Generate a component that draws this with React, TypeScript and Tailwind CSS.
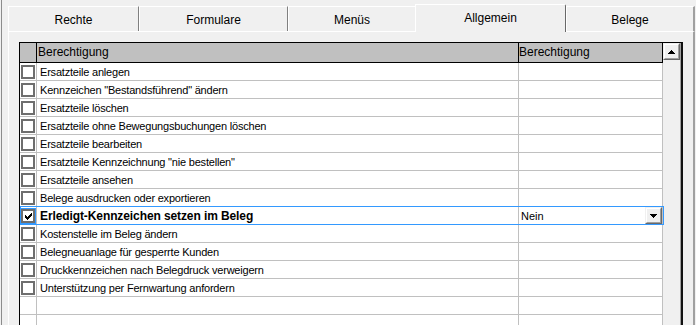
import React from "react";

const rows: { text: string; bold?: boolean; checked?: boolean; value?: string }[] = [
  { text: "Ersatzteile anlegen" },
  { text: 'Kennzeichen "Bestandsführend" ändern' },
  { text: "Ersatzteile löschen" },
  { text: "Ersatzteile ohne Bewegungsbuchungen löschen" },
  { text: "Ersatzteile bearbeiten" },
  { text: 'Ersatzteile Kennzeichnung "nie bestellen"' },
  { text: "Ersatzteile ansehen" },
  { text: "Belege ausdrucken oder exportieren" },
  { text: "Erledigt-Kennzeichen setzen im Beleg", bold: true, checked: true, value: "Nein" },
  { text: "Kostenstelle im Beleg ändern" },
  { text: "Belegneuanlage für gesperrte Kunden" },
  { text: "Druckkennzeichen nach Belegdruck verweigern" },
  { text: "Unterstützung per Fernwartung anfordern" },
  { text: "" },
  { text: "" },
  { text: "" },
];

function Check() {
  const cols = [
    [2, 4],
    [3, 5],
    [4, 6],
    [3, 5],
    [2, 4],
    [1, 3],
    [0, 2],
  ];
  return (
    <svg width="7" height="7" viewBox="0 0 7 7" shapeRendering="crispEdges">
      {cols.map(([a, b], i) => (
        <rect key={i} x={i} y={a} width="1" height={b - a + 1} fill="#000" />
      ))}
    </svg>
  );
}

function Tri({ up }: { up?: boolean }) {
  const ws = up ? [1, 3, 5, 7] : [7, 5, 3, 1];
  return (
    <svg width="7" height="4" viewBox="0 0 7 4" shapeRendering="crispEdges">
      {ws.map((w, i) => (
        <rect key={i} x={(7 - w) / 2} y={i} width={w} height="1" fill="#000" />
      ))}
    </svg>
  );
}

function Bevel({ children, className }: { children?: React.ReactNode; className: string }) {
  return (
    <div className={"border border-t-[#f0f0f0] border-l-[#f0f0f0] border-b-[#696969] border-r-[#696969] " + className}>
      <div className="w-full h-full border border-t-white border-l-white border-b-[#a0a0a0] border-r-[#a0a0a0] bg-[#f0f0f0] flex items-center justify-center">
        {children}
      </div>
    </div>
  );
}

function Tab({ label, w, selected, last }: { label: string; w: string; selected?: boolean; last?: boolean }) {
  if (selected) {
    return (
      <div
        className={
          "relative -mb-px h-[28px] shrink-0 bg-[#f0f0f0] border-t border-l border-white border-r border-r-[#696969] rounded-tr-[2px] pt-[6px] text-center text-[12px] leading-[14px] text-black " +
          w
        }
      >
        {label}
      </div>
    );
  }
  return (
    <div
      className={
        "h-[25px] shrink-0 border-t border-l border-white pt-[6px] text-center text-[12px] leading-[14px] text-black " +
        (last ? "border-r-2 border-r-[#a0a0a0] " : label === "Menüs" ? "" : "border-r border-r-[#808080] ") +
        w
      }
    >
      {label}
    </div>
  );
}

export default function App() {
  return (
    <div className="w-[696px] h-[325px] bg-[#f0f0f0] overflow-hidden flex font-['Liberation_Sans',Arial,sans-serif]">
      <div className="ml-px w-px bg-[#8c8c8c] shrink-0" />
      <div className="ml-[6px] w-[687px] shrink-0 flex flex-col">
        <div className="relative z-10 flex items-end h-[31px] shrink-0">
          <Tab label="Rechte" w="w-[131px]" />
          <Tab label="Formulare" w="w-[149px]" />
          <Tab label="Menüs" w="w-[127px]" />
          <Tab label="Allgemein" w="w-[151px]" selected />
          <Tab label="Belege" w="w-[129px]" last />
        </div>
        <div className="flex-1 min-h-0 flex flex-col border-t border-l border-white border-r-2 border-r-[#a0a0a0] pt-[10px] pl-[10px]">
          <div className="relative flex-1 min-h-0 w-[664px] overflow-hidden flex border-t border-l border-black border-r-2 border-r-[#111]">
            <div className="w-[643px] shrink-0 flex flex-col">
              <div className="flex h-[20px] shrink-0 bg-[#c0c0c0] border-b border-black text-[12px] leading-[18px] text-black">
                <div className="w-[17px] border-r border-black" />
                <div className="w-[482px] border-r border-black pl-[1px]">Berechtigung</div>
                <div className="w-[144px] border-r border-black">Berechtigung</div>
              </div>
              {rows.map((r, i) => (
                <div key={i} className="flex h-[18px] shrink-0 bg-white border-b border-[#c0c0c0] text-black">
                  <div className="w-[17px] border-r border-[#c0c0c0] pl-px pt-[2px]">
                    {r.text && (
                      <div
                        className={
                          "w-[14px] h-[14px] border-2 border-[#6e6e6e] bg-white flex items-center justify-center " +
                          (r.checked ? "outline outline-1 outline-[#3399ff]" : "")
                        }
                      >
                        {r.checked && <Check />}
                      </div>
                    )}
                  </div>
                  <div
                    className={
                      "w-[482px] border-r border-[#c0c0c0] pl-[3px] whitespace-nowrap overflow-hidden " +
                      (r.bold
                        ? "text-[12px] font-bold leading-[18px] tracking-[-0.1px]"
                        : "text-[11px] leading-[18px] tracking-[-0.2px]")
                    }
                  >
                    {r.text}
                  </div>
                  <div className="w-[144px] border-r border-[#c0c0c0] flex items-start">
                    {r.value && (
                      <>
                        <span className="pl-[2px] text-[11px] leading-[18px]">{r.value}</span>
                        <Bevel className="ml-auto w-[17px] h-[17px]">
                          <Tri />
                        </Bevel>
                      </>
                    )}
                  </div>
                </div>
              ))}
            </div>
            <div className="w-[18px] shrink-0 flex flex-col border-r border-[#a0a0a0]">
              <Bevel className="w-[17px] h-[17px] shrink-0">
                <Tri up />
              </Bevel>
              <div className="flex-1 bg-[#f0f0f0]" />
            </div>
            <div className="absolute left-0 top-[163px] w-[644px] h-[19px] border border-[#3399ff] pointer-events-none" />
          </div>
        </div>
      </div>
    </div>
  );
}
